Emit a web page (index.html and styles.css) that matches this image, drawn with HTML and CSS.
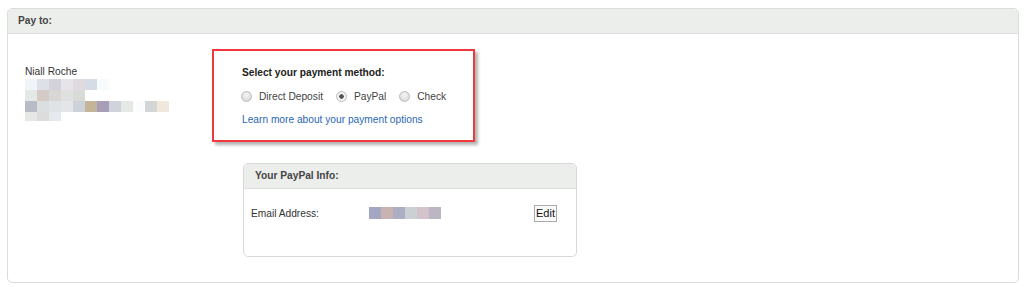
FILE: index.html
```html
<!DOCTYPE html>
<html lang="en">
<head>
  <meta charset="UTF-8" />
  <title>Pay to</title>
  <link rel="stylesheet" href="styles.css">
</head>
<body>
<!-- Pay to panel -->
<section class="panel">
  <div class="panel-head">Pay to:</div>
  <div class="panel-body">
    <!-- Payee -->
    <div class="payee">
      <div class="payee-name">Niall Roche</div>
      <div class="blur-row">
        <span style="background:#f1f4f8"></span><span style="background:#dde0e6"></span><span style="background:#d3d1da"></span><span style="background:#e6e4e8"></span><span style="background:#dfdadd"></span><span style="background:#d6dbe5"></span><span style="background:#f8fbfc"></span>
      </div>
      <div class="blur-row">
        <span style="background:#e4e8e6"></span><span style="background:#d4cbc6"></span><span style="background:#d9d6d6"></span><span style="background:#dfe0e0"></span><span style="background:#d8dbd8"></span>
      </div>
      <div class="blur-row">
        <span style="background:#b9bcc6"></span><span style="background:#dcdfe2"></span><span style="background:#e0e3e6"></span><span style="background:#e4e5e8"></span><span style="background:#cdd2da"></span><span style="background:#c4b49a"></span><span style="background:#a79fb8"></span><span style="background:#d1d3da"></span><span style="background:#e6e8e6"></span><span style="background:#fafcfd"></span><span style="background:#d4d6d6"></span><span style="background:#f1e7dc"></span>
      </div>
      <div class="blur-row short">
        <span style="background:#e6e8e6"></span><span style="background:#dcdcdc"></span><span style="background:#e6eaee"></span>
      </div>
    </div>

    <!-- Payment method + PayPal info -->
    <div class="methods">
      <div class="method-box">
        <div class="method-title">Select your payment method:</div>
        <div class="radio-row">
          <label class="radio"><span class="dot"></span>Direct Deposit</label>
          <label class="radio"><span class="dot checked"></span>PayPal</label>
          <label class="radio"><span class="dot"></span>Check</label>
        </div>
        <a class="learn-more" href="#">Learn more about your payment options</a>
      </div>

      <div class="info-box">
        <div class="info-head">Your PayPal Info:</div>
        <div class="info-row">
          <span class="info-label">Email Address:</span>
          <span class="blur-row email">
            <span style="background:#a5a6c2"></span><span style="background:#c7b4b0"></span><span style="background:#adaec4"></span><span style="background:#cbd0d2"></span><span style="background:#d5c3cc"></span><span style="background:#bcb5c2"></span>
          </span>
          <button class="edit">Edit</button>
        </div>
      </div>
    </div>
  </div>
</section>
</body>
</html>
```

FILE: styles.css
```css
/* Global */
body {
  margin: 0;
  background: #fff;
  font-family: Arial, "Liberation Sans", sans-serif;
  font-size: 10.2px;
  color: #333;
}
/* Outer panel */
.panel {
  margin: 8px 5px 5px 7px;
  border: 1px solid #dcdcdc;
  border-radius: 5px;
  overflow: hidden;
}
.panel-head {
  height: 24px;
  line-height: 24px;
  padding-left: 10px;
  background: #eceeec;
  border-bottom: 1px solid #dedede;
  font-weight: bold;
  color: #444;
}
.panel-body {
  display: flex;
  padding: 0 0 25px 17px;
}
/* Payee */
.payee {
  width: 187px;
  padding-top: 31px;
}
.payee-name {
  line-height: 13px;
  margin-bottom: 1px;
}
.blur-row {
  display: flex;
}
.blur-row span {
  width: 12px;
  height: 11px;
}
.blur-row.short span {
  height: 9px;
}
/* Payment method box */
.methods {
  display: flex;
  flex-direction: column;
}
.method-box {
  width: 231px;
  margin-top: 15px;
  padding: 15px 0 14px 28px;
  border: 2px solid #f0393c;
  box-shadow: 3px 3px 3px rgba(0, 0, 0, 0.3);
}
.method-title {
  font-weight: bold;
  color: #222;
  line-height: 13px;
}
.radio-row {
  display: flex;
  align-items: center;
  margin-top: 11px;
  color: #444;
}
.radio {
  display: flex;
  align-items: center;
  margin-right: 14px;
  line-height: 13px;
}
.dot {
  width: 9px;
  height: 9px;
  margin: 0 7px 0 -1px;
  border: 1px solid #bbb;
  border-radius: 50%;
  background: radial-gradient(circle at 50% 35%, #f4f4f4, #d4d4d4);
}
.dot.checked {
  background: radial-gradient(circle, #555 0 2px, #f2f2f2 2.5px);
}
.learn-more {
  display: block;
  margin-top: 10px;
  color: #2a68b5;
  text-decoration: none;
  line-height: 13px;
}
/* PayPal info box */
.info-box {
  width: 332px;
  margin: 21px 0 0 31px;
  border: 1px solid #d8d8d8;
  border-radius: 5px;
  overflow: hidden;
}
.info-head {
  height: 24px;
  line-height: 24px;
  padding-left: 11px;
  background: #eceeec;
  border-bottom: 1px solid #dedede;
  font-weight: bold;
  color: #444;
}
.info-row {
  display: flex;
  align-items: center;
  height: 26px;
  padding: 11px 19px 30px 7px;
}
.info-label {
  width: 118px;
  color: #333;
}
.blur-row.email span {
  height: 12px;
}
.edit {
  margin-left: auto;
  height: 17px;
  padding: 0 1px;
  font-family: Arial, "Liberation Sans", sans-serif;
  font-size: 11px;
  color: #111;
  background: #fafafa;
  border: 1px solid #aaa;
  border-radius: 0;
}
```
